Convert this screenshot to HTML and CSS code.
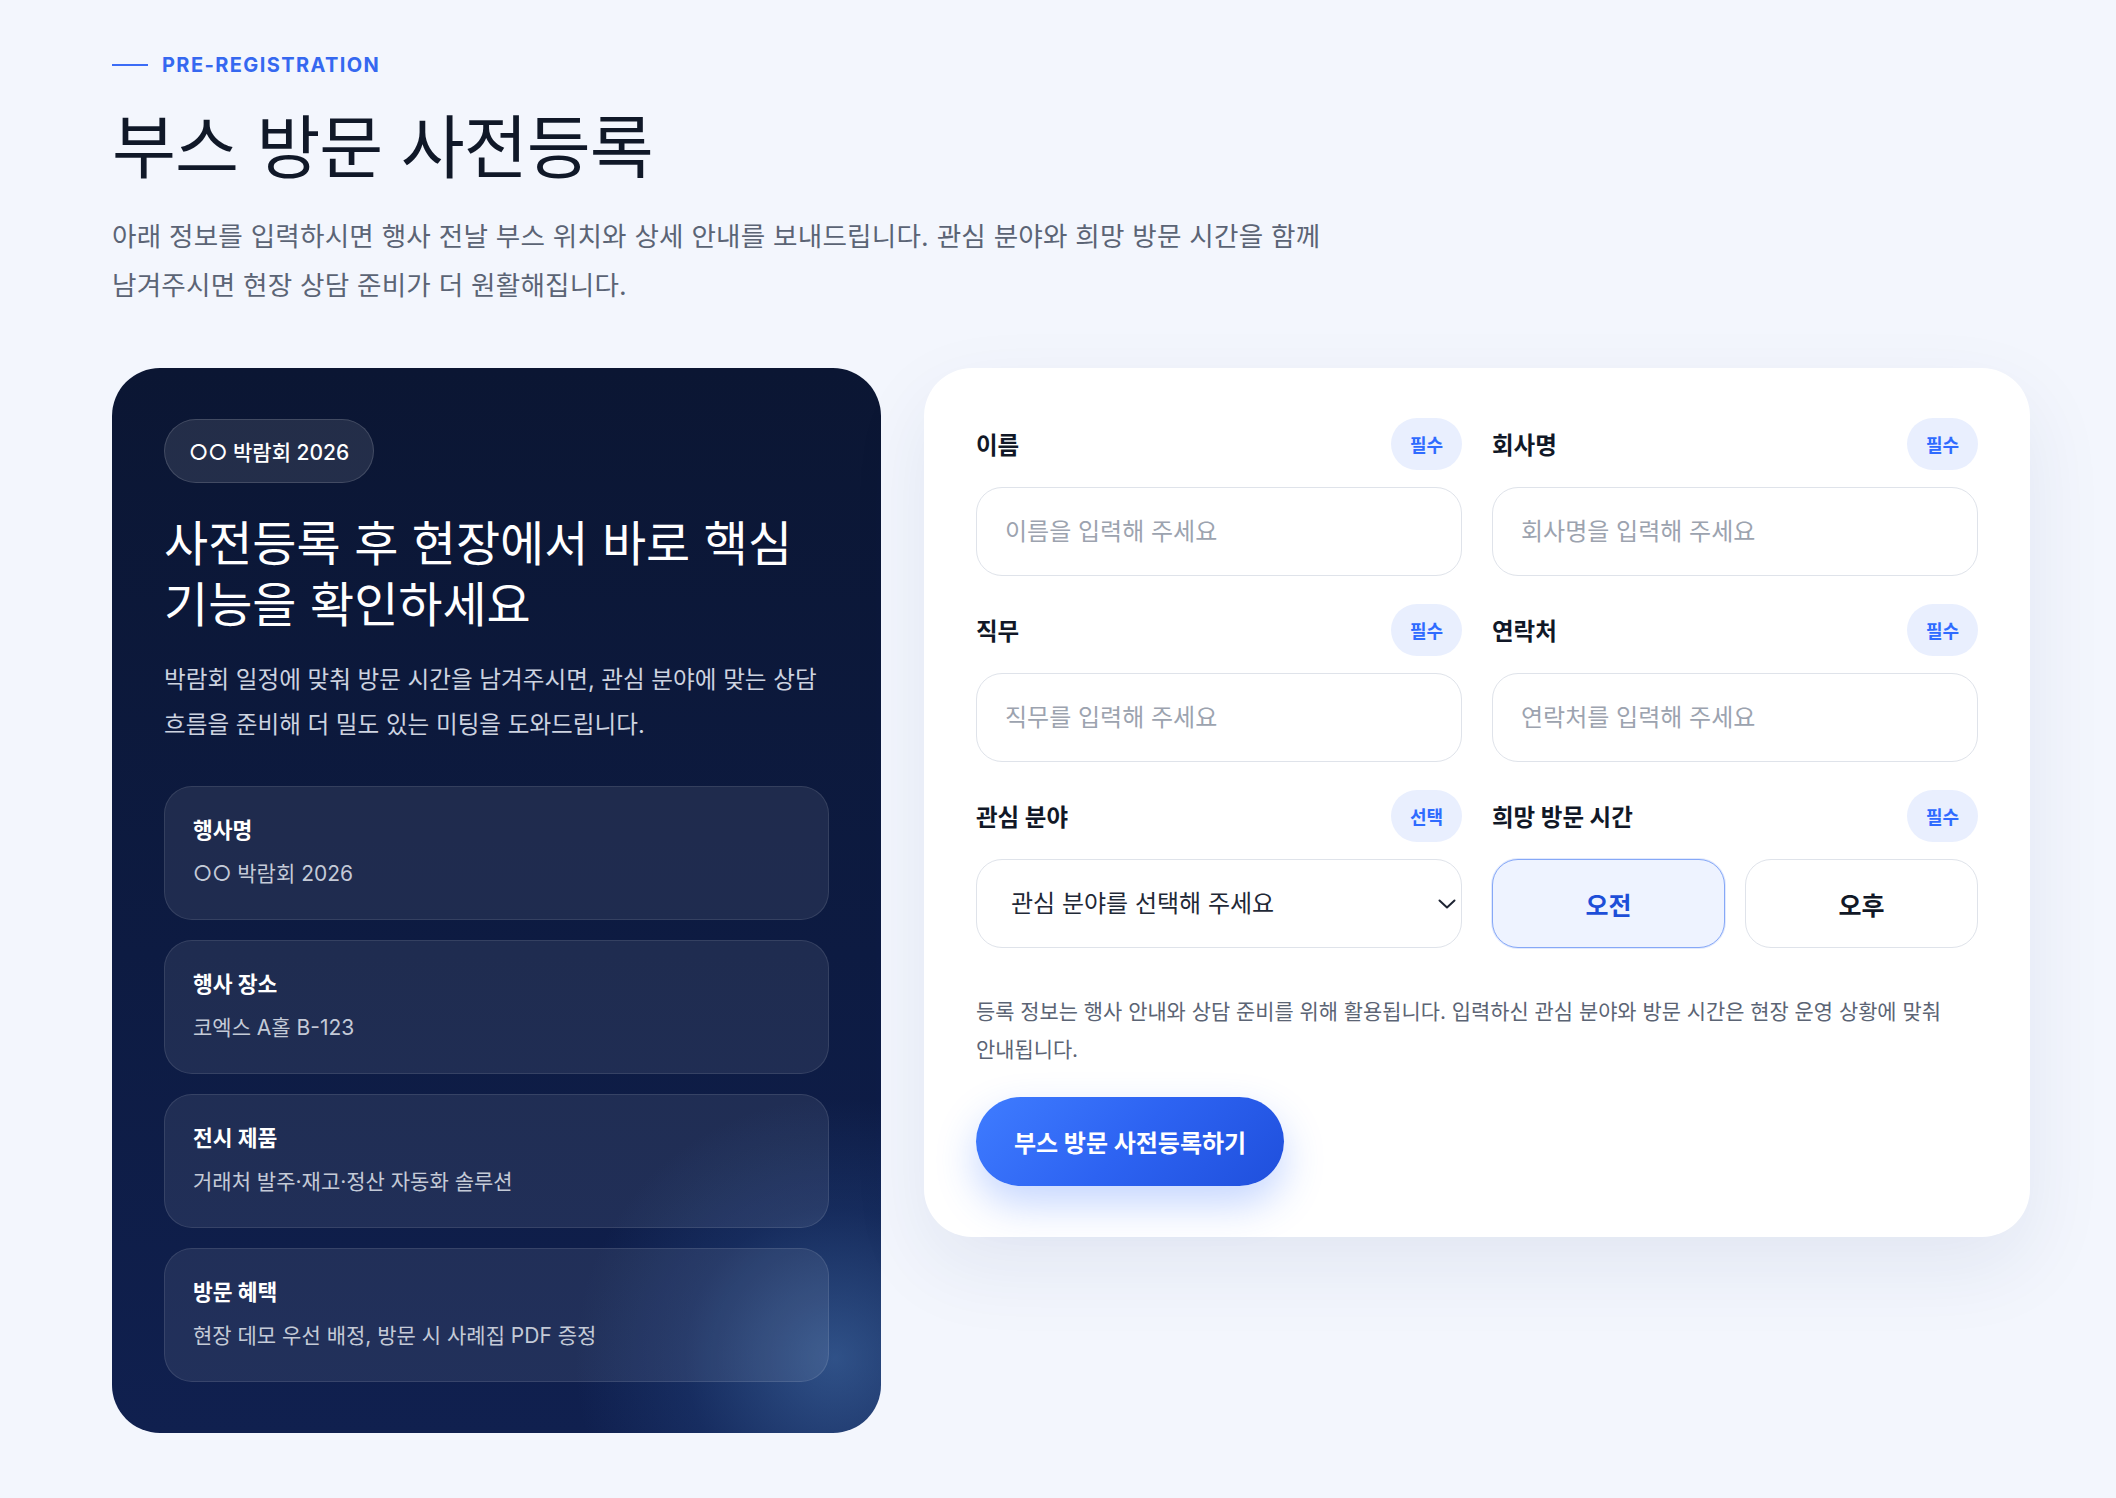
FILE: index.html
```html
<!DOCTYPE html>
<html lang="ko">
<head>
    <meta charset="UTF-8">
    <meta name="viewport" content="width=device-width, initial-scale=1.0">
    <title>부스 방문 사전등록</title>
    <link rel="stylesheet" href="styles.css">
</head>
<body>

<main class="page">
    <header class="intro">
        <p class="eyebrow"><span class="eyebrow-line"></span>PRE-REGISTRATION</p>
        <h1>부스 방문 사전등록</h1>
        <p class="lead">아래 정보를 입력하시면 행사 전날 부스 위치와 상세 안내를 보내드립니다. 관심 분야와 희망 방문 시간을 함께 남겨주시면 현장 상담 준비가 더 원활해집니다.</p>
    </header>

    <div class="layout">
        <!-- Event summary -->
        <section class="event-card">
            <span class="event-tag">○○ 박람회 2026</span>
            <h2>사전등록 후 현장에서 바로 핵심 기능을 확인하세요</h2>
            <p class="event-desc">박람회 일정에 맞춰 방문 시간을 남겨주시면, 관심 분야에 맞는 상담 흐름을 준비해 더 밀도 있는 미팅을 도와드립니다.</p>

            <ul class="info-list">
                <li class="info-item">
                    <strong>행사명</strong>
                    <span>○○ 박람회 2026</span>
                </li>
                <li class="info-item">
                    <strong>행사 장소</strong>
                    <span>코엑스 A홀 B-123</span>
                </li>
                <li class="info-item">
                    <strong>전시 제품</strong>
                    <span>거래처 발주·재고·정산 자동화 솔루션</span>
                </li>
                <li class="info-item">
                    <strong>방문 혜택</strong>
                    <span>현장 데모 우선 배정, 방문 시 사례집 PDF 증정</span>
                </li>
            </ul>
        </section>

        <!-- Registration form -->
        <form class="form-card" onsubmit="return false;">
            <div class="field-grid">
                <div class="field">
                    <div class="field-head">
                        <label for="name">이름</label>
                        <span class="badge">필수</span>
                    </div>
                    <input class="input" id="name" type="text" placeholder="이름을 입력해 주세요">
                </div>
                <div class="field">
                    <div class="field-head">
                        <label for="company">회사명</label>
                        <span class="badge">필수</span>
                    </div>
                    <input class="input" id="company" type="text" placeholder="회사명을 입력해 주세요">
                </div>
                <div class="field">
                    <div class="field-head">
                        <label for="role">직무</label>
                        <span class="badge">필수</span>
                    </div>
                    <input class="input" id="role" type="text" placeholder="직무를 입력해 주세요">
                </div>
                <div class="field">
                    <div class="field-head">
                        <label for="phone">연락처</label>
                        <span class="badge">필수</span>
                    </div>
                    <input class="input" id="phone" type="text" placeholder="연락처를 입력해 주세요">
                </div>
                <div class="field">
                    <div class="field-head">
                        <label for="interest">관심 분야</label>
                        <span class="badge">선택</span>
                    </div>
                    <div class="select-wrap">
                        <select class="input select" id="interest">
                            <option>관심 분야를 선택해 주세요</option>
                        </select>
                        <svg class="chevron" width="18" height="10" viewBox="0 0 18 10" fill="none">
                            <path d="M1.5 1.5 L9 8.5 L16.5 1.5" stroke="#1e2433" stroke-width="2" stroke-linecap="round" stroke-linejoin="round"/>
                        </svg>
                    </div>
                </div>
                <div class="field">
                    <div class="field-head">
                        <label>희망 방문 시간</label>
                        <span class="badge">필수</span>
                    </div>
                    <div class="time-options">
                        <button type="button" class="time-btn active">오전</button>
                        <button type="button" class="time-btn">오후</button>
                    </div>
                </div>
            </div>

            <p class="note">등록 정보는 행사 안내와 상담 준비를 위해 활용됩니다. 입력하신 관심 분야와 방문 시간은 현장 운영 상황에 맞춰 안내됩니다.</p>

            <button type="submit" class="submit-btn">부스 방문 사전등록하기</button>
        </form>
    </div>
</main>

</body>
</html>
```

FILE: styles.css
```css
* {
    box-sizing: border-box;
}

body {
    margin: 0;
    background-color: #f3f6fd;
    font-family: Inter, "Noto Sans CJK KR", sans-serif;
    color: #111827;
    word-break: keep-all;
}

.page {
    padding: 53px 0 60px 112px;
}

/* Header */
.eyebrow {
    display: flex;
    align-items: center;
    gap: 14px;
    margin: 0;
    font-size: 20px;
    line-height: 24px;
    font-weight: 700;
    letter-spacing: 0.07em;
    color: #3568f0;
}

.eyebrow-line {
    width: 36px;
    height: 2px;
    background-color: #3b6cf6;
}

h1 {
    margin: 30px 0 0;
    font-size: 69.5px;
    line-height: 1.2;
    font-weight: 400;
    letter-spacing: -1px;
    color: #101828;
}

.lead {
    max-width: 1300px;
    margin: 22px 0 0;
    font-size: 26.6px;
    line-height: 49px;
    letter-spacing: 0.2px;
    color: #5b6475;
}

.layout {
    display: grid;
    grid-template-columns: 769px 1106px;
    gap: 43px;
    align-items: start;
    margin-top: 58px;
}

/* Left card */
.event-card {
    padding: 51px 52px 51px;
    border-radius: 48px;
    color: #fff;
    background:
        radial-gradient(circle at 94% 93%, rgba(74, 122, 184, 0.55) 0, rgba(44, 84, 150, 0.25) 150px, rgba(20, 40, 90, 0) 260px),
        linear-gradient(180deg, #0b1633 0%, #0d1b42 55%, #10204f 100%);
}

.event-tag {
    display: inline-flex;
    align-items: center;
    height: 64px;
    padding: 0 24px;
    border-radius: 999px;
    border: 1px solid rgba(255, 255, 255, 0.14);
    background-color: rgba(255, 255, 255, 0.1);
    font-size: 21px;
    font-weight: 500;
}

.event-card h2 {
    margin: 30px 0 0;
    font-size: 48px;
    line-height: 61px;
    font-weight: 400;
}

.event-desc {
    margin: 22px 0 0;
    font-size: 23.6px;
    line-height: 45px;
    color: #cdd3e0;
}

.info-list {
    list-style: none;
    margin: 39px 0 0;
    padding: 0;
    display: flex;
    flex-direction: column;
    gap: 20px;
}

.info-item {
    display: flex;
    flex-direction: column;
    gap: 14px;
    padding: 28px 28px 30px;
    border-radius: 28px;
    border: 1px solid rgba(255, 255, 255, 0.1);
    background-color: rgba(255, 255, 255, 0.08);
}

.info-item strong {
    font-size: 21.5px;
    line-height: 30px;
    font-weight: 700;
}

.info-item span {
    font-size: 21px;
    line-height: 30px;
    color: #c4cad7;
}

/* Right card */
.form-card {
    padding: 50px 52px 51px;
    border-radius: 48px;
    background-color: #fff;
    box-shadow: 0 30px 80px rgba(30, 50, 110, 0.08);
}

.field-grid {
    display: grid;
    grid-template-columns: 1fr 1fr;
    column-gap: 30px;
    row-gap: 28px;
}

.field-head {
    display: flex;
    align-items: center;
    justify-content: space-between;
    height: 52px;
    margin-bottom: 17px;
}

.field-head label {
    font-size: 23.5px;
    font-weight: 700;
    color: #111827;
}

.badge {
    display: inline-flex;
    align-items: center;
    height: 52px;
    padding: 0 19px;
    border-radius: 999px;
    background-color: #e9effe;
    color: #2f6bff;
    font-size: 18px;
    font-weight: 700;
}

.input {
    display: block;
    width: 100%;
    height: 89px;
    padding: 0 28px;
    border: 1px solid #dfe3ea;
    border-radius: 26px;
    background-color: #fff;
    font-family: inherit;
    font-size: 24px;
    color: #1f2937;
    outline: none;
}

.input::placeholder {
    color: #9ca3af;
}

.select-wrap {
    position: relative;
}

.select {
    appearance: none;
    -webkit-appearance: none;
    padding-left: 34px;
}

.chevron {
    position: absolute;
    right: 6px;
    top: 40px;
    pointer-events: none;
}

.time-options {
    display: grid;
    grid-template-columns: 1fr 1fr;
    gap: 20px;
}

.time-btn {
    height: 89px;
    border: 1px solid #dfe3ea;
    border-radius: 26px;
    background-color: #fff;
    font-family: inherit;
    font-size: 25px;
    font-weight: 700;
    color: #111827;
    cursor: pointer;
}

.time-btn.active {
    border: 1.5px solid #86a8f7;
    background-color: #eef3ff;
    color: #1d4ed8;
    box-shadow: 0 0 0 1px rgba(134, 168, 247, 0.25);
}

.note {
    margin: 45px 0 0;
    font-size: 20.9px;
    line-height: 38px;
    color: #5b6474;
}

.submit-btn {
    margin-top: 28px;
    height: 89px;
    padding: 0 38px;
    border: none;
    border-radius: 999px;
    background: linear-gradient(135deg, #3f7cff 0%, #2d63f2 50%, #1f4fdc 100%);
    box-shadow: 0 18px 40px rgba(47, 107, 255, 0.28);
    font-family: inherit;
    font-size: 24px;
    font-weight: 700;
    color: #fff;
    cursor: pointer;
}
```
